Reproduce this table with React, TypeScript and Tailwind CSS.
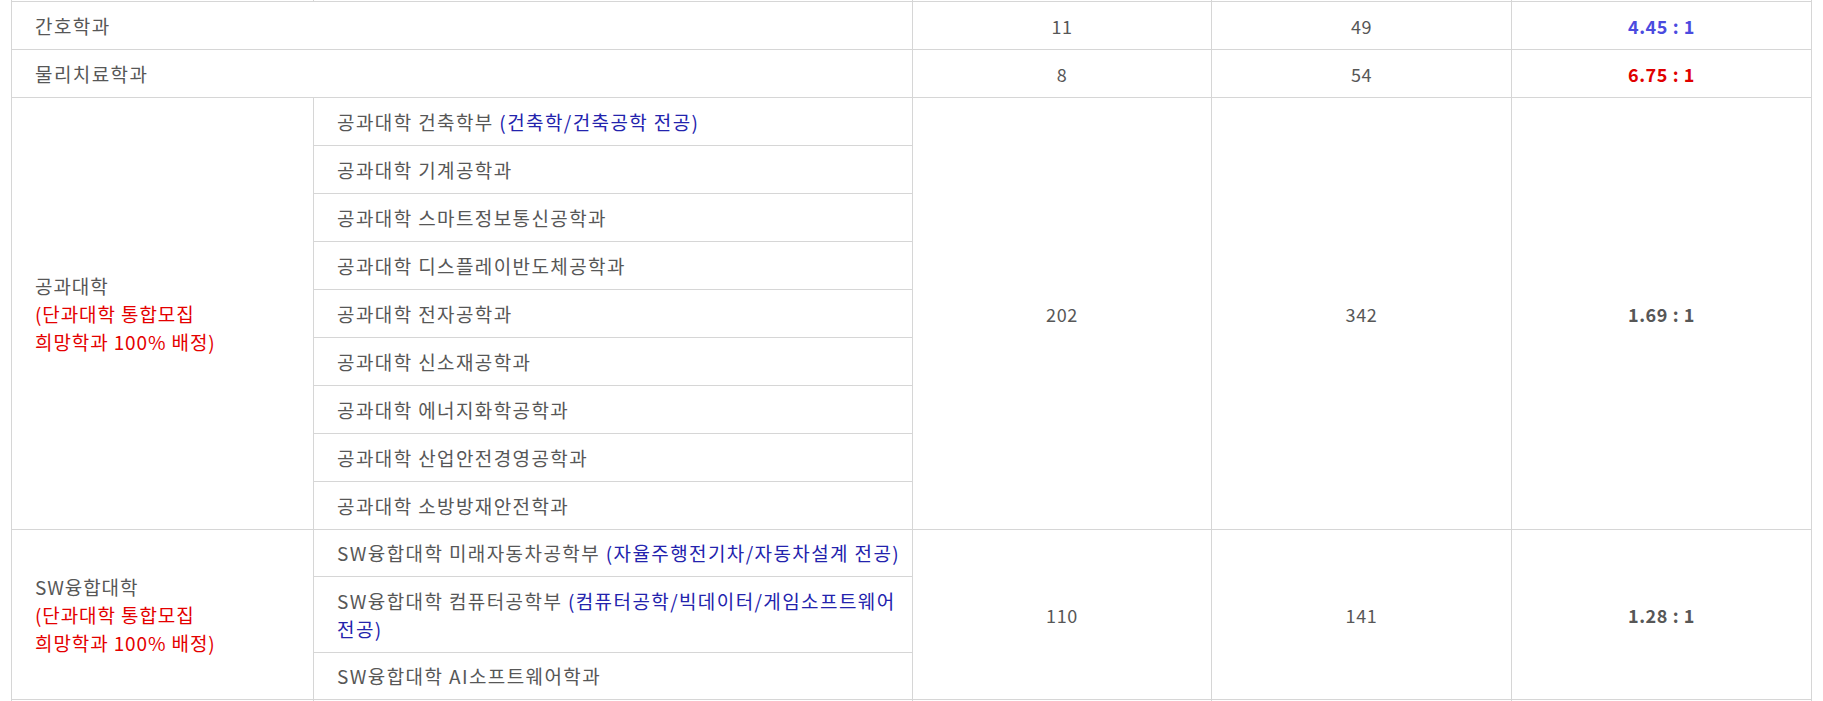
import React from 'react'

type Major = { name: string; note?: React.ReactNode }

const engineering: Major[] = [
  { name: '공과대학 건축학부', note: '(건축학/건축공학 전공)' },
  { name: '공과대학 기계공학과' },
  { name: '공과대학 스마트정보통신공학과' },
  { name: '공과대학 디스플레이반도체공학과' },
  { name: '공과대학 전자공학과' },
  { name: '공과대학 신소재공학과' },
  { name: '공과대학 에너지화학공학과' },
  { name: '공과대학 산업안전경영공학과' },
  { name: '공과대학 소방방재안전학과' },
]

const software: Major[] = [
  { name: 'SW융합대학 미래자동차공학부', note: '(자율주행전기차/자동차설계 전공)' },
  {
    name: 'SW융합대학 컴퓨터공학부',
    note: (
      <>
        (컴퓨터공학/빅데이터/게임소프트웨어
        <br />
        전공)
      </>
    ),
  },
  { name: 'SW융합대학 AI소프트웨어학과' },
]

const cell = 'border border-[#d6d6d6] pl-[23px] pr-[10px] py-0 align-middle text-[19px] tracking-[1.4px]'
const college = 'border border-[#d6d6d6] pl-[23px] pr-[10px] py-0 align-middle text-[19px] tracking-[0.9px]'
const num = 'border border-[#d6d6d6] px-2 py-0 text-center align-middle text-[18px] tracking-[0.6px]'

function MajorCell({ m }: { m: Major }) {
  return (
    <td className={cell}>
      {m.name}
      {m.note && <span className="text-[#2323ad]"> {m.note}</span>}
    </td>
  )
}

function Group({
  title,
  majors,
  quota,
  applicants,
  ratio,
  heights,
}: {
  title: string
  majors: Major[]
  quota: number
  applicants: number
  ratio: string
  heights: string[]
}) {
  return (
    <>
      {majors.map((m, i) => (
        <tr key={m.name} className={heights[i]}>
          {i === 0 && (
            <td rowSpan={majors.length} className={college}>
              {title}
              <br />
              <span className="text-[#e40000]">
                (단과대학 통합모집
                <br />
                희망학과 100% 배정)
              </span>
            </td>
          )}
          <MajorCell m={m} />
          {i === 0 && (
            <>
              <td rowSpan={majors.length} className={num}>
                {quota}
              </td>
              <td rowSpan={majors.length} className={num}>
                {applicants}
              </td>
              <td rowSpan={majors.length} className={`${num} font-bold`}>
                {ratio}
              </td>
            </>
          )}
        </tr>
      ))}
    </>
  )
}

export default function App() {
  return (
    <div className="h-[701px] overflow-hidden bg-white">
      <table
        className="-mt-[47px] ml-[11px] w-[1801px] table-fixed border-collapse leading-[28px] text-[#575757]"
        style={{ fontFamily: "'Noto Sans CJK KR', 'Noto Sans', sans-serif" }}
      >
        <colgroup>
          <col className="w-[302px]" />
          <col className="w-[599px]" />
          <col className="w-[299px]" />
          <col className="w-[300px]" />
          <col className="w-[300px]" />
        </colgroup>
        <tbody>
          <tr className="h-[48px]">
            <td className={cell}></td>
            <td className={cell}></td>
            <td className={num}></td>
            <td className={num}></td>
            <td className={num}></td>
          </tr>
          <tr className="h-[48px]">
            <td colSpan={2} className={cell}>
              간호학과
            </td>
            <td className={num}>11</td>
            <td className={num}>49</td>
            <td className={`${num} font-bold text-[#4b4bdf]`}>4.45 : 1</td>
          </tr>
          <tr className="h-[48px]">
            <td colSpan={2} className={cell}>
              물리치료학과
            </td>
            <td className={num}>8</td>
            <td className={num}>54</td>
            <td className={`${num} font-bold text-[#e00000]`}>6.75 : 1</td>
          </tr>
          <Group
            title="공과대학"
            majors={engineering}
            quota={202}
            applicants={342}
            ratio="1.69 : 1"
            heights={engineering.map(() => 'h-[48px]')}
          />
          <Group
            title="SW융합대학"
            majors={software}
            quota={110}
            applicants={141}
            ratio="1.28 : 1"
            heights={['h-[47px]', 'h-[76px]', 'h-[47px]']}
          />
          <tr className="h-[48px]">
            <td className={cell}></td>
            <td className={cell}></td>
            <td className={num}></td>
            <td className={num}></td>
            <td className={num}></td>
          </tr>
        </tbody>
      </table>
    </div>
  )
}
